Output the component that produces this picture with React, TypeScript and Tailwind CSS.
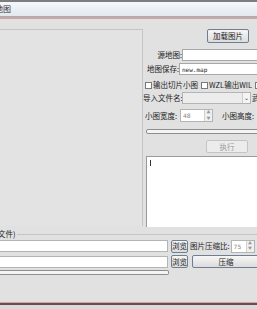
const FONT = "font-['Noto_Sans_CJK_SC','Noto_Sans',sans-serif]";

function Btn({ children, className = '', disabled = false }: { children: string; className?: string; disabled?: boolean }) {
  return (
    <button
      type="button"
      className={`shrink-0 flex items-center justify-center rounded-[2px] border text-[7.5px] leading-none ${
        disabled
          ? 'border-[#c4c4c4] bg-[#ececec] text-[#9a9a9a]'
          : 'border-[#6f7f93] bg-gradient-to-b from-[#f6f6f6] to-[#dcdcdc] text-[#1a1a1a]'
      } ${className}`}
    >
      {children}
    </button>
  );
}

function Check({ label }: { label: string }) {
  return (
    <label className="shrink-0 flex items-center gap-[1px] text-[7.5px] leading-none text-[#222]">
      <span className="w-[7px] h-[7px] border border-[#7a7a7a] bg-white shrink-0" />
      <span>{label}</span>
    </label>
  );
}

function Spinner({ value, className = '' }: { value: string; className?: string }) {
  return (
    <div className={`shrink-0 flex h-[13px] border border-[#b4b4b4] bg-white ${className}`}>
      <span className="flex-1 pl-[2px] text-[6px] leading-[11px] text-[#888] font-['DejaVu_Sans',sans-serif]">{value}</span>
      <span className="w-[8px] flex flex-col border-l border-[#d0d0d0] bg-[#f0f0f0]">
        <span className="flex-1 text-[4px] leading-[5px] text-center text-[#999]">▲</span>
        <span className="flex-1 text-[4px] leading-[5px] text-center text-[#999]">▼</span>
      </span>
    </div>
  );
}

export default function App() {
  return (
    <div className={`w-[257px] h-[309px] overflow-hidden whitespace-nowrap bg-[#e1e1e1] flex flex-col ${FONT}`}>
      <div className="h-[2px] bg-[#7d7d7d] shrink-0" />
      <div className="h-[14px] shrink-0 bg-gradient-to-b from-[#f5f8fb] to-[#e3e8ee] flex items-center">
        <span className="-ml-[5px] text-[8px] leading-none text-[#333]">地图</span>
      </div>
      <div className="h-[1px] bg-[#a9aeb4] shrink-0" />
      <div className="h-[2px] bg-[#cba6a6] shrink-0" />

      <div className="flex pt-[10px] shrink-0">
        <div className="w-[143px] h-[197px] shrink-0 border-t border-r border-[#c4c4c4] bg-[#e3e3e3]" />

        <div className="ml-[3px] w-[140px] shrink-0 flex flex-col">
          <div className="flex h-[14px]">
            <Btn className="ml-[61px] w-[42px] h-[14px]">加载图片</Btn>
          </div>

          <div className="flex items-center mt-[6px] h-[12px]">
            <span className="shrink-0 w-[36px] text-right text-[7.5px] leading-none text-[#222]">源地图:</span>
            <div className="shrink-0 w-[90px] h-[12px] border border-[#a8a8a8] bg-white" />
          </div>

          <div className="flex items-center mt-[2px] h-[12px]">
            <span className="shrink-0 w-[33px] text-right text-[7.5px] leading-none text-[#222]">地图保存:</span>
            <div className="shrink-0 w-[90px] h-[12px] border border-[#a8a8a8] bg-white flex items-center pl-[2px] text-[6px] font-['DejaVu_Sans_Mono',monospace] text-[#222]">
              new.map
            </div>
          </div>

          <div className="flex items-center mt-[4px] h-[12px] gap-[3px] -ml-[1px]">
            <Check label="输出切片小图" />
            <Check label="WZL输出WIL" />
            <span className="w-[7px] h-[7px] border border-[#7a7a7a] bg-white shrink-0" />
          </div>

          <div className="flex items-center h-[13px] -ml-[3px]">
            <span className="shrink-0 w-[39px] text-[7.5px] leading-none text-[#222]">导入文件名:</span>
            <div className="shrink-0 w-[69px] h-[12px] border border-[#b4b4b4] bg-[#ececec] flex justify-end">
              <span className="w-[8px] h-full flex items-center justify-center text-[6px] text-[#333] bg-[#f4f4f4] border-l border-[#cfcfcf]">⌄</span>
            </div>
            <span className="shrink-0 ml-[1px] text-[7.5px] leading-none text-[#222]">武</span>
          </div>

          <div className="flex items-center mt-[5px] h-[13px] -ml-[1px]">
            <span className="shrink-0 w-[35px] text-[7.5px] leading-none text-[#222]">小图宽度:</span>
            <Spinner value="48" className="w-[33px]" />
            <span className="shrink-0 ml-[9px] text-[7.5px] leading-none text-[#222]">小图高度:</span>
          </div>

          <div className="mt-[7px] h-[5px] w-[120px] shrink-0 rounded-[2px] border border-[#8e8e8e] bg-[#f4f4f4]" />

          <div className="flex h-[13px] mt-[6px]">
            <Btn disabled className="ml-[60px] w-[42px] h-[13px]">执行</Btn>
          </div>

          <div className="mt-[3px] h-[71px] w-[120px] shrink-0 border-l border-t border-[#9a9a9a] bg-white pl-[3px] pt-[3px]">
            <span className="block w-[1px] h-[6px] bg-[#333]" />
          </div>
        </div>
      </div>

      <div className="flex items-center h-[10px] mt-[2px] shrink-0">
        <span className="shrink-0 -ml-[2px] text-[7.5px] leading-none text-[#222] pr-[1px]">文件)</span>
        <div className="flex-1 h-[1px] bg-[#c6c6c6]" />
      </div>

      <div className="flex items-center h-[14px] shrink-0">
        <div className="shrink-0 w-[168px] h-[12px] border-t border-b border-r border-[#b4b4b4] bg-white" />
        <Btn className="ml-[3px] w-[17px] h-[13px]">浏览</Btn>
        <span className="shrink-0 ml-[2px] text-[7.5px] leading-none text-[#222]">图片压缩比:</span>
        <Spinner value="75" className="ml-[1px] w-[24px]" />
      </div>

      <div className="flex items-center h-[13px] mt-[2px] shrink-0">
        <div className="shrink-0 w-[168px] h-[12px] border-t border-b border-r border-[#b4b4b4] bg-white" />
        <Btn className="ml-[3px] w-[17px] h-[13px]">浏览</Btn>
        <Btn className="ml-[4px] w-[68px] h-[13px]">压缩</Btn>
      </div>

      <div className="mt-[2px] h-[5px] w-[169px] shrink-0 rounded-r-[2px] border border-l-0 border-[#8e8e8e] bg-[#f4f4f4]" />

      <div className="h-[27px] shrink-0" />
      <div className="h-[1px] bg-[#c9a8a8] shrink-0" />
      <div className="h-[2px] bg-[#6f4c4c] shrink-0" />
      <div className="flex-1 bg-[#dadada]" />
    </div>
  );
}
